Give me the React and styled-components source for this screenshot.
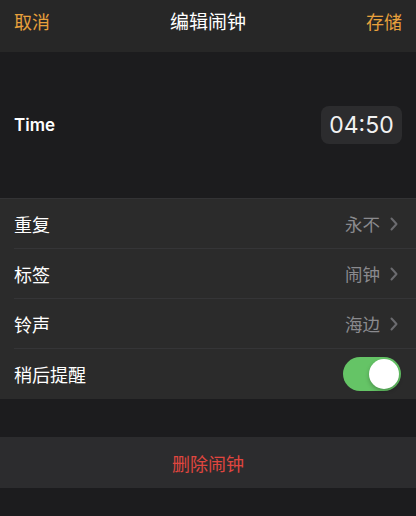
import React, { useState } from 'react'
import styled, { createGlobalStyle } from 'styled-components'

const Global = createGlobalStyle`
    html, body {
        margin: 0;
        padding: 0;
        background: #1c1c1e;
    }
    body {
        font-family: "Noto Sans CJK SC", "Noto Sans", sans-serif;
        -webkit-font-smoothing: antialiased;
    }
`

const Screen = styled.div`
    width: 416px;
    height: 516px;
    background: #1c1c1e;
    display: flex;
    flex-direction: column;
    overflow: hidden;
`

const NavBar = styled.div`
    height: 52px;
    background: #272727;
    display: grid;
    grid-template-columns: 1fr auto 1fr;
    align-items: start;
    padding: 6px 14px 0;
    box-sizing: border-box;
`

const NavButton = styled.span`
    color: #e8a03c;
    font-size: 18px;
    line-height: 30px;
    justify-self: ${p => (p.right ? 'end' : 'start')};
`

const NavTitle = styled.span`
    color: #ffffff;
    font-size: 19px;
    font-weight: 400;
    line-height: 30px;
`

const TimeSection = styled.div`
    height: 146px;
    display: flex;
    align-items: center;
    justify-content: space-between;
    padding: 0 14px;
    box-sizing: border-box;
`

const TimeLabel = styled.span`
    color: #ffffff;
    font-family: "Inter", "Liberation Sans", sans-serif;
    font-size: 17px;
    font-weight: 600;
`

const TimePill = styled.div`
    width: 81px;
    height: 38px;
    border-radius: 8px;
    background: #2c2c2e;
    color: #f2f2f2;
    font-family: "Inter", "Liberation Sans", sans-serif;
    font-size: 23px;
    font-weight: 400;
    display: flex;
    align-items: center;
    justify-content: center;
`

const Group = styled.div`
    background: #2b2b2b;
    border-top: 1px solid #333335;
`

const Row = styled.div`
    height: 50px;
    margin-left: 14px;
    padding-right: 14px;
    display: flex;
    align-items: center;
    justify-content: space-between;
    border-bottom: ${p => (p.last ? 'none' : '1px solid #353537')};
    box-sizing: border-box;
`

const RowLabel = styled.span`
    color: #ffffff;
    font-size: 18px;
`

const RowValue = styled.span`
    display: flex;
    align-items: center;
    gap: 10px;
    color: #8a8a8e;
    font-size: 17.5px;
    margin-right: 4px;
`

const Switch = styled.button`
    width: 58px;
    height: 34px;
    border: none;
    padding: 2px;
    border-radius: 17px;
    background: ${p => (p.on ? '#65c466' : '#39393d')};
    display: flex;
    justify-content: ${p => (p.on ? 'flex-end' : 'flex-start')};
    align-items: center;
    box-sizing: border-box;
    margin-right: 1px;
`

const Knob = styled.span`
    width: 30px;
    height: 30px;
    border-radius: 50%;
    background: #ffffff;
    box-shadow: 0 2px 4px rgba(0, 0, 0, 0.25);
`

const Spacer = styled.div`
    height: ${p => p.h}px;
`

const DeleteButton = styled.div`
    height: 51px;
    background: #2c2c2e;
    color: #e0463f;
    font-size: 18px;
    display: flex;
    align-items: center;
    justify-content: center;
`

const Chevron = () => (
    <svg width="8" height="14" viewBox="0 0 8 14">
        <path d="M1.5 1.5 L6.5 7 L1.5 12.5" fill="none" stroke="#6b6b6f" strokeWidth="2" strokeLinecap="round" strokeLinejoin="round" />
    </svg>
)

const rows = [
    { label: '重复', value: '永不' },
    { label: '标签', value: '闹钟' },
    { label: '铃声', value: '海边' },
]

export default function App() {
    const [snooze, setSnooze] = useState(true)
    return (
        <Screen>
            <Global />
            <NavBar>
                <NavButton>取消</NavButton>
                <NavTitle>编辑闹钟</NavTitle>
                <NavButton right>存储</NavButton>
            </NavBar>
            <TimeSection>
                <TimeLabel>Time</TimeLabel>
                <TimePill>04:50</TimePill>
            </TimeSection>
            <Group>
                {rows.map(r => (
                    <Row key={r.label}>
                        <RowLabel>{r.label}</RowLabel>
                        <RowValue>{r.value}<Chevron /></RowValue>
                    </Row>
                ))}
                <Row last>
                    <RowLabel>稍后提醒</RowLabel>
                    <Switch on={snooze} onClick={() => setSnooze(!snooze)}>
                        <Knob />
                    </Switch>
                </Row>
            </Group>
            <Spacer h={38} />
            <DeleteButton>删除闹钟</DeleteButton>
        </Screen>
    )
}
